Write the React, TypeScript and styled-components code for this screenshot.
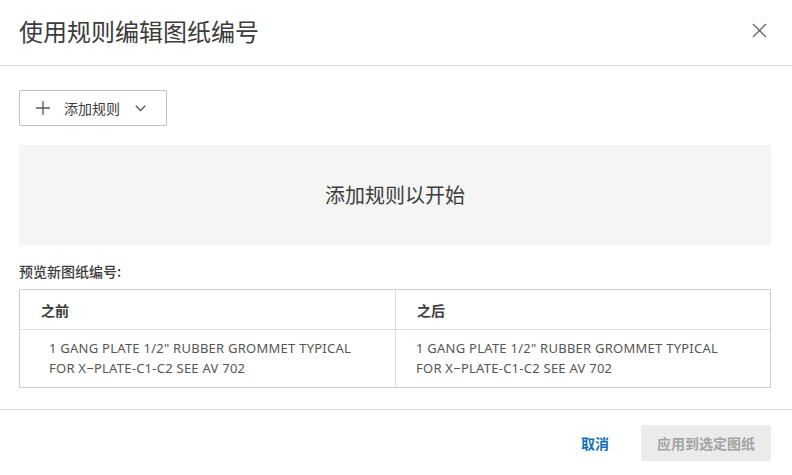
import React from "react";
import styled, { createGlobalStyle } from "styled-components";

const Global = createGlobalStyle`
  html, body { margin: 0; padding: 0; background: #fff; }
  body { font-family: "Noto Sans", "Noto Sans CJK SC", sans-serif; color: #3c3c3c; }
  * { box-sizing: border-box; }
`;

const Dialog = styled.div`
  width: 792px;
  height: 475px;
  display: flex;
  flex-direction: column;
  background: #fff;
`;

const Header = styled.div`
  height: 66px;
  display: flex;
  align-items: center;
  justify-content: space-between;
  padding: 0 25px 4px 19px;
  border-bottom: 1px solid #d9d9d9;
`;

const Title = styled.h1`
  margin: 0;
  font-size: 24px;
  font-weight: 400;
  color: #3c3c3c;
  font-family: "Noto Sans CJK SC", sans-serif;
`;

const CloseBtn = styled.button`
  border: none;
  background: none;
  padding: 0;
  width: 16px;
  height: 16px;
  display: flex;
  align-items: center;
  justify-content: center;
  cursor: pointer;
`;

const Body = styled.div`
  flex: 1;
  padding: 24px 21px 0 19px;
  display: flex;
  flex-direction: column;
`;

const AddButton = styled.button`
  align-self: flex-start;
  width: 148px;
  height: 36px;
  border: 1px solid #bfbfbf;
  border-radius: 2px;
  background: #fff;
  display: flex;
  align-items: center;
  padding: 0 0 0 16px;
  font-family: "Noto Sans CJK SC", sans-serif;
  font-size: 14px;
  color: #3c3c3c;
  cursor: pointer;
`;

const AddLabel = styled.span`
  margin: 0 15px 0 14px;
`;

const Empty = styled.div`
  margin-top: 19px;
  height: 100px;
  background: #f5f5f5;
  display: flex;
  align-items: center;
  justify-content: center;
  font-family: "Noto Sans CJK SC", sans-serif;
  font-size: 20px;
  color: #3c3c3c;
  padding-bottom: 2px;
`;

const PreviewLabel = styled.div`
  margin-top: 17px;
  font-family: "Noto Sans CJK SC", sans-serif;
  font-size: 14px;
  font-weight: 500;
  color: #3c3c3c;
  line-height: 18px;
`;

const Table = styled.div`
  margin-top: 9px;
  border: 1px solid #cfcfcf;
  display: grid;
  grid-template-columns: 376px 1fr;
`;

const HeadCell = styled.div<{ $last?: boolean }>`
  height: 40px;
  display: flex;
  align-items: center;
  padding-left: 21px;
  border-bottom: 1px solid #dcdcdc;
  border-right: ${(p) => (p.$last ? "none" : "1px solid #dcdcdc")};
  font-family: "Noto Sans CJK SC", sans-serif;
  font-size: 14px;
  font-weight: 700;
  color: #3c3c3c;
`;

const Cell = styled.div<{ $last?: boolean; $indent: number }>`
  padding: 8px 8px 9px ${(p) => p.$indent}px;
  border-right: ${(p) => (p.$last ? "none" : "1px solid #dcdcdc")};
  font-family: "Noto Sans", sans-serif;
  font-size: 13px;
  line-height: 20px;
  color: #555;
  letter-spacing: 0.25px;
`;

const Footer = styled.div`
  height: 66px;
  border-top: 1px solid #d9d9d9;
  display: flex;
  align-items: center;
  justify-content: flex-end;
  padding: 0 21px 0 0;
  gap: 32px;
`;

const LinkBtn = styled.button`
  border: none;
  background: none;
  padding: 0;
  font-family: "Noto Sans CJK SC", sans-serif;
  font-size: 14px;
  font-weight: 700;
  color: #0f6fb8;
  cursor: pointer;
`;

const PrimaryBtn = styled.button`
  width: 130px;
  height: 36px;
  border: none;
  border-radius: 2px;
  background: #ebebeb;
  font-family: "Noto Sans CJK SC", sans-serif;
  font-size: 14px;
  font-weight: 700;
  color: #a3a3a3;
`;

const text1 = "1 GANG PLATE 1/2\" RUBBER GROMMET TYPICAL";
const text2 = "FOR X\u2212PLATE-C1-C2 SEE AV 702";

export default function App() {
  return (
    <>
      <Global />
      <Dialog>
        <Header>
          <Title>使用规则编辑图纸编号</Title>
          <CloseBtn aria-label="close">
            <svg width="15" height="15" viewBox="0 0 15 15">
              <path d="M1 1L14 14M14 1L1 14" stroke="#6a6a6a" strokeWidth="1.4" />
            </svg>
          </CloseBtn>
        </Header>
        <Body>
          <AddButton>
            <svg width="14" height="14" viewBox="0 0 14 14">
              <path d="M7 0V14M0 7H14" stroke="#555" strokeWidth="1.3" />
            </svg>
            <AddLabel>添加规则</AddLabel>
            <svg width="11" height="7" viewBox="0 0 11 7">
              <path d="M0.8 0.8L5.5 5.5L10.2 0.8" stroke="#555" strokeWidth="1.3" fill="none" />
            </svg>
          </AddButton>
          <Empty>添加规则以开始</Empty>
          <PreviewLabel>预览新图纸编号:</PreviewLabel>
          <Table>
            <HeadCell>之前</HeadCell>
            <HeadCell $last>之后</HeadCell>
            <Cell $indent={29}>
              {text1}
              <br />
              {text2}
            </Cell>
            <Cell $last $indent={20}>
              {text1}
              <br />
              {text2}
            </Cell>
          </Table>
        </Body>
        <Footer>
          <LinkBtn>取消</LinkBtn>
          <PrimaryBtn disabled>应用到选定图纸</PrimaryBtn>
        </Footer>
      </Dialog>
    </>
  );
}
